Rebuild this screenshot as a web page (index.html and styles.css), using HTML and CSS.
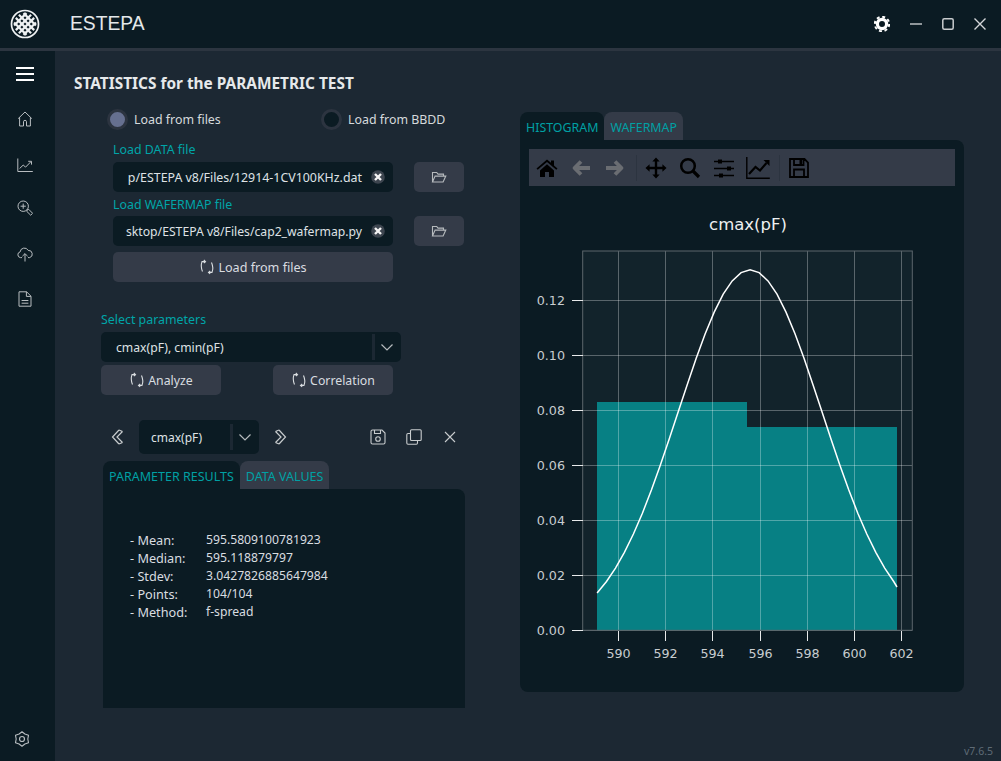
FILE: index.html
```html
<!DOCTYPE html>
<html lang="en">
<head>
<meta charset="utf-8">
<title>ESTEPA</title>
<link rel="stylesheet" href="styles.css">
</head>
<body>
<svg class="defs" width="0" height="0" aria-hidden="true">
  <symbol id="refresh" viewBox="0 0 16 16"><g fill="none" stroke="currentColor" stroke-width="1.1"><path d="M6 2.600H3Q1.300 7 3.500 12.500"/><path d="M4.800 1 6.500 2.600 4.800 4"/><path d="M10 13.400h3Q14.800 9 12.500 3.500"/><path d="M11.200 12 9.500 13.400l1.700 1.500"/></g></symbol>
  <symbol id="folder" viewBox="0 0 16 16"><path fill="none" stroke="currentColor" stroke-width="1.1" d="M1.500 13V3.500h4.200l1.300 1.600h5.500v2M1.500 13h10.600l2.700-5.900H4.100L1.500 13z"/></symbol>
  <symbol id="clear" viewBox="0 0 14 14"><circle cx="7" cy="7" r="6.800" fill="#3d454f"/><path d="M4 4l6 6m0-6L4 10" stroke="#f4f4f4" stroke-width="2.400"/></symbol>
  <symbol id="chev" viewBox="0 0 16 16"><path fill="none" stroke="currentColor" stroke-width="1.200" d="M2.500 5.500 8 11l5.500-5.500"/></symbol>
</svg>
<div class="app">
  <header class="titlebar">
    <svg class="logo" viewBox="0 0 32 32" width="32" height="32" aria-hidden="true">
      <circle cx="16" cy="16" r="13.500" fill="none" stroke="#eef1f2" stroke-width="1.700"/>
      <g stroke="#eef1f2" stroke-width="2.200" fill="none">
        <path d="M9.900 6.800 25.200 22.100M6.800 9.900 22.100 25.200M14.500 5.100 26.900 17.500M5.100 14.500 17.500 26.900"/>
        <path d="M22.100 6.800 6.800 22.100M25.200 9.900 9.900 25.200M17.500 5.100 5.100 17.500M26.900 14.500 14.500 26.900"/>
      </g>
    </svg>
    <span class="apptitle">ESTEPA</span>
    <div class="winbtns">
      <svg width="16" height="16" viewBox="0 0 16 16" aria-hidden="true"><circle cx="8" cy="8" r="4.600" fill="none" stroke="#fff" stroke-width="3.200"/><circle cx="8" cy="8" r="7.200" fill="none" stroke="#fff" stroke-width="2" stroke-dasharray="3 2.650"/></svg>
      <svg width="12" height="12" viewBox="0 0 12 12" aria-hidden="true"><path d="M0 6h12" stroke="#c9ccce" stroke-width="1.400"/></svg>
      <svg width="12" height="12" viewBox="0 0 12 12" aria-hidden="true"><rect x=".8" y=".8" width="10.400" height="10.400" rx="1.500" fill="none" stroke="#c9ccce" stroke-width="1.500"/></svg>
      <svg width="12" height="12" viewBox="0 0 12 12" aria-hidden="true"><path d="M.5.5l11 11m0-11L.5 11.500" stroke="#d4d6d8" stroke-width="1.400"/></svg>
    </div>
  </header>
  <div class="body">
    <nav class="sidebar">
      <svg class="ham" width="18" height="14" viewBox="0 0 18 14" aria-hidden="true"><path d="M0 1h18M0 7h18M0 13h18" stroke="#fff" stroke-width="2"/></svg>
      <svg class="navicon" width="16" height="16" viewBox="0 0 16 16" aria-hidden="true"><path fill="none" stroke="currentColor" d="M1.200 7.600 8 1l6.800 6.600M2.600 6.400V15h3.900v-4.200a1.500 1.500 0 0 1 3 0V15h3.900V6.400"/></svg>
      <svg class="navicon" width="16" height="16" viewBox="0 0 16 16" aria-hidden="true"><path fill="none" stroke="currentColor" d="M.8 1.500v13h15M2.600 11.500l3.600-3.400 2.400 2 5.200-5.300M11.200 4.300h3.300v3.300"/></svg>
      <svg class="navicon tight" width="16" height="16" viewBox="0 0 16 16" aria-hidden="true"><g fill="none" stroke="currentColor"><circle cx="6.200" cy="6.200" r="5.200"/><path d="M3.600 6.200h5.200M6.200 3.600v5.200"/><path d="M10.200 9.800l1.600-.4 3.800 3.900-1.900 1.900-3.900-3.800z"/></g></svg>
      <svg class="navicon" width="16" height="16" viewBox="0 0 16 16" aria-hidden="true"><path fill="none" stroke="currentColor" d="M5 11.600H3.400a2.900 2.900 0 0 1-.3-5.700A4.300 4.300 0 0 1 11.200 4.400a3.700 3.700 0 0 1 1.500 7.200H11M8 15.500V7.800M5.400 10.200 8 7.600l2.600 2.600"/></svg>
      <svg class="navicon near" width="16" height="16" viewBox="0 0 16 16" aria-hidden="true"><path fill="none" stroke="currentColor" d="M2 .8h7.600l4.400 4.400v10H2zM9.400.8v4.600h4.600M4.600 9.500h6.800M4.600 12.200h6.800"/></svg>
      <svg class="navicon settings" width="16" height="16" viewBox="0 0 16 16" aria-hidden="true"><path fill="none" stroke="currentColor" stroke-linejoin="round" stroke-width="1.100" d="M8 .8 10.900 3 14.500 4.300 13.800 8 14.500 11.700 10.900 13 8 15.200 5.100 13 1.500 11.700 2.200 8 1.500 4.300 5.100 3z"/><circle cx="8" cy="8" r="2.500" fill="none" stroke="currentColor" stroke-width="1.200"/></svg>
    </nav>
    <main class="main">
      <h1 class="heading">STATISTICS for the PARAMETRIC TEST</h1>
      <div class="columns">
        <section class="leftcol">
          <div class="radios">
            <label class="radio"><span class="dot on"></span>Load from files</label>
            <label class="radio"><span class="dot"></span>Load from BBDD</label>
          </div>
          <div class="filegroup">
            <div class="lbl">Load DATA file</div>
            <div class="filerow">
              <div class="field"><span class="clip">p/ESTEPA v8/Files/12914-1CV100KHz.dat</span><svg class="clear" width="14" height="14" aria-hidden="true"><use href="#clear"/></svg></div>
              <button class="btn folderbtn"><svg width="16" height="16" aria-hidden="true"><use href="#folder"/></svg></button>
            </div>
            <div class="lbl second">Load WAFERMAP file</div>
            <div class="filerow">
              <div class="field"><span class="clip narrow">sktop/ESTEPA v8/Files/cap2_wafermap.py</span><svg class="clear" width="14" height="14" aria-hidden="true"><use href="#clear"/></svg></div>
              <button class="btn folderbtn"><svg width="16" height="16" aria-hidden="true"><use href="#folder"/></svg></button>
            </div>
            <button class="btn loadbtn"><svg width="16" height="16" aria-hidden="true"><use href="#refresh"/></svg>Load from files</button>
          </div>
          <div class="paramgroup">
            <div class="lbl">Select parameters</div>
            <div class="combo wide"><span class="combotext">cmax(pF), cmin(pF)</span><span class="arrow"><svg width="16" height="16" aria-hidden="true"><use href="#chev"/></svg></span></div>
            <div class="actions">
              <button class="btn actbtn"><svg width="16" height="16" aria-hidden="true"><use href="#refresh"/></svg>Analyze</button>
              <button class="btn actbtn"><svg width="16" height="16" aria-hidden="true"><use href="#refresh"/></svg>Correlation</button>
            </div>
          </div>
          <div class="navrow">
            <svg class="pager" width="14" height="16" viewBox="0 0 14 16" aria-hidden="true"><path fill="none" stroke="currentColor" stroke-width="1.200" d="M8 1 1.500 8 8 15M11.500 2.500 6 8l5.500 5.500M8 1l3.500 1.500M8 15l3.500-1.500"/></svg>
            <div class="combo small"><span class="combotext">cmax(pF)</span><span class="arrow"><svg width="16" height="16" aria-hidden="true"><use href="#chev"/></svg></span></div>
            <svg class="pager" width="14" height="16" viewBox="0 0 14 16" aria-hidden="true"><path fill="none" stroke="currentColor" stroke-width="1.200" d="M6 1l6.500 7L6 15M2.500 2.500 8 8l-5.500 5.500M6 1 2.500 2.500M6 15l-3.500-1.500"/></svg>
            <div class="tools">
              <svg width="16" height="16" viewBox="0 0 16 16" aria-hidden="true"><g fill="none" stroke="currentColor" stroke-width="1.100"><path d="M1 2.500a1.500 1.500 0 0 1 1.500-1.500h9.500l3 3v9.500a1.500 1.500 0 0 1-1.500 1.500h-11a1.500 1.500 0 0 1-1.500-1.500z"/><path d="M4.500 1v3.500h6V1"/><circle cx="8" cy="10" r="2.300"/></g></svg>
              <svg width="16" height="16" viewBox="0 0 16 16" aria-hidden="true"><g fill="none" stroke="currentColor" stroke-width="1.100"><rect x="4.500" y=".8" width="10.700" height="10.700" rx="1"/><path d="M4.500 4.500H2a1.200 1.200 0 0 0-1.200 1.200V14A1.200 1.200 0 0 0 2 15.200h8.300a1.200 1.200 0 0 0 1.200-1.200v-2.500"/></g></svg>
              <svg width="16" height="16" viewBox="0 0 16 16" aria-hidden="true"><path d="M3 3l10 10m0-10L3 13" stroke="currentColor" stroke-width="1.100"/></svg>
            </div>
          </div>
          <div class="tabs">
            <span class="tab active">PARAMETER RESULTS</span>
            <span class="tab">DATA VALUES</span>
          </div>
          <div class="results">
            <dl class="stats">
              <dt>- Mean:</dt><dd>595.5809100781923</dd>
              <dt>- Median:</dt><dd>595.118879797</dd>
              <dt>- Stdev:</dt><dd>3.0427826885647984</dd>
              <dt>- Points:</dt><dd>104/104</dd>
              <dt>- Method:</dt><dd>f-spread</dd>
            </dl>
          </div>
        </section>
        <section class="rightcol">
          <div class="tabs">
            <span class="tab active">HISTOGRAM</span>
            <span class="tab">WAFERMAP</span>
          </div>
          <div class="chartpanel">
            <div class="toolbar">
              <svg class="tb" width="22" height="22" viewBox="0 0 22 22" aria-hidden="true"><path fill="#000" d="M11 2.500 .5 11.500l1.200 1.300L11 5l9.300 7.800 1.200-1.300-3.500-3.100V3.500h-3v2.200zM4 13.500V20h5v-5h4v5h5v-6.500L11 7.300z"/></svg>
              <svg class="tb" width="22" height="22" viewBox="0 0 22 22" aria-hidden="true"><path fill="none" stroke="#6a6d72" stroke-width="3.800" stroke-linejoin="round" d="M20 11H5M11 4.500 4.500 11l6.500 6.500"/></svg>
              <svg class="tb" width="22" height="22" viewBox="0 0 22 22" aria-hidden="true"><path fill="none" stroke="#6a6d72" stroke-width="3.800" stroke-linejoin="round" d="M2 11h15M11 4.500l6.500 6.500-6.500 6.500"/></svg>
              <span class="tbsep"></span>
              <svg class="tb" width="22" height="22" viewBox="0 0 24 24" aria-hidden="true"><path fill="#000" d="M12 .5 16 5h-2.700v5.700H19V8l4.500 4-4.500 4v-2.700h-5.700V19H16l-4 4.500L8 19h2.700v-5.700H5V16L.5 12 5 8v2.700h5.700V5H8z"/></svg>
              <svg class="tb" width="22" height="22" viewBox="0 0 22 22" aria-hidden="true"><g fill="none" stroke="#000"><circle cx="9" cy="9" r="6.800" stroke-width="2.500"/><path d="M14 14l6 6" stroke-width="3.200"/></g></svg>
              <svg class="tb" width="22" height="22" viewBox="0 0 22 22" aria-hidden="true"><path stroke="#000" stroke-width="1.600" d="M1 4.500h20M1 11.500h20M1 18.500h20"/><path fill="#000" d="M5 2.500h4v4H5zM14 9.500h4v4h-4zM6 16.500h4v4H6z"/></svg>
              <svg class="tb" width="24" height="24" viewBox="0 0 24 24" aria-hidden="true"><path fill="none" stroke="#000" stroke-width="1.400" d="M.8 1v21.300h23"/><path fill="none" stroke="#000" stroke-width="2.200" d="M3 18l6.500-7 4.500 3.500 6.500-7.500"/><path fill="#000" d="M17.500 4h6v6z"/></svg>
              <span class="tbsep"></span>
              <svg class="tb" width="22" height="22" viewBox="0 0 22 22" aria-hidden="true"><path fill="none" stroke="#000" stroke-width="1.800" d="M2 2h14.500L20 5.500V20H2zM6 2v6h9.500V2M6 20v-7.500h10V20"/><path fill="#000" d="M11.500 3h2.500v4h-2.500z"/></svg>
            </div>
            <svg class="chart" width="444" height="506" viewBox="520 186 444 506" role="img" aria-label="Histogram of cmax(pF)">
              <text x="748" y="230" class="ctitle">cmax(pF)</text>
              <rect x="582.700" y="251" width="329.600" height="379.300" fill="#12232b"/>
              <path d="M597 630.300V402H747V427H897V630.300z" fill="#078084"/>
              <g stroke="#fff" stroke-opacity=".3" stroke-width="1">
                <path d="M618.500 251V630M665.500 251V630M712.500 251V630M760.500 251V630M807.500 251V630M854.500 251V630M901.500 251V630"/>
                <path d="M583 630.500H912M583 575.500H912M583 520.500H912M583 465.500H912M583 410.500H912M583 355.500H912M583 300.500H912"/>
              </g>
              <polyline fill="none" stroke="#fff" stroke-width="1.500" points="597.100,593 606.500,581.500 615.500,568.100 624.400,552.300 633.400,534 642.400,513.200 651.400,490.100 660.300,465.200 669.300,438.800 678.300,411.600 687.300,384.400 696.200,358.200 705.200,333.700 714.200,312.100 723.200,294.200 732.200,280.900 741.100,272.600 750.100,269.700 759.100,272.600 768,280.900 777,294.200 786,312.100 795,333.700 804,358.200 812.900,384.400 821.900,411.600 830.900,438.800 839.900,465.200 848.800,490.100 857.800,513.200 866.800,534 875.800,552.300 884.700,568.100 893.700,581.500 897,587"/>
              <rect x="582.700" y="251" width="329.600" height="379.300" fill="none" stroke="#5c666c" stroke-width="1"/>
              <g stroke="#e8eaeb" stroke-width="1">
                <path d="M618.500 631v10M665.500 631v10M712.500 631v10M760.500 631v10M807.500 631v10M854.500 631v10M901.500 631v10"/>
                <path d="M572 630.500h11M572 575.500h11M572 520.500h11M572 465.500h11M572 410.500h11M572 355.500h11M572 300.500h11"/>
              </g>
              <g class="xt">
                <text x="618.500" y="658">590</text><text x="665.500" y="658">592</text><text x="712.500" y="658">594</text><text x="760.500" y="658">596</text><text x="807.500" y="658">598</text><text x="854.500" y="658">600</text><text x="901.500" y="658">602</text>
              </g>
              <g class="yt">
                <text x="565" y="635">0.00</text><text x="565" y="580">0.02</text><text x="565" y="525">0.04</text><text x="565" y="470">0.06</text><text x="565" y="415">0.08</text><text x="565" y="360">0.10</text><text x="565" y="305">0.12</text>
              </g>
            </svg>
          </div>
        </section>
      </div>
      <footer class="version">v7.6.5</footer>
    </main>
  </div>
</div>
</body>
</html>
```
FILE: styles.css
```css
* { box-sizing: border-box; }
html, body { margin: 0; height: 100%; }
body { background: #1c2833; color: #d9dde0; font: 12.400px "Noto Sans", sans-serif; overflow: hidden; }
.defs { position: absolute; }
.app { width: 1001px; height: 761px; display: flex; flex-direction: column; }

.titlebar { height: 51px; flex: none; background: #0b1b23; border-bottom: 3px solid #2c3540; display: flex; align-items: center; padding: 0 15px 0 9px; }
.logo { flex: none; }
.apptitle { margin-left: 29px; font: 19.300px "Liberation Sans", Arial, sans-serif; color: #e4e8ea; }
.winbtns { margin-left: auto; display: flex; align-items: center; gap: 20px; }

.body { flex: 1; display: flex; min-height: 0; }
.sidebar { width: 55px; flex: none; background: #0b1b23; display: flex; flex-direction: column; align-items: center; color: #b8bdc0; padding: 16px 6px 0 0; }
.navicon { margin-top: 30px; display: block; }
.navicon.tight { margin-top: 27px; }
.navicon.near { margin-top: 29px; }
.navicon.settings { margin-top: auto; margin-bottom: 14px; margin-right: 6px; }

.main { flex: 1; padding: 23px 0 0 19px; position: relative; min-width: 0; }
.heading { margin: 0; font: 700 15.400px/20px "Noto Sans", sans-serif; color: #e6e9eb; }
.columns { display: flex; margin-top: 5px; }
.leftcol { width: 391px; padding-left: 29px; flex: none; }
.rightcol { margin: 13px 0 0 55px; width: 444px; flex: none; }
.rightcol .tab { font-size: 12.400px; }

.radios { display: flex; margin-left: 4px; height: 22px; margin-top: 9px; }
.radio { display: flex; align-items: center; gap: 6px; width: 214px; flex: none; color: #d6dadd; }
.dot { width: 21px; height: 21px; border-radius: 50%; background: #0b1b23; border: 3px solid #2c3440; }
.dot.on { background: #667090; }

.lbl { color: #00a5a8; line-height: 18px; height: 18px; }
.filegroup { margin: 11px 0 0 10px; }
.filerow { display: flex; gap: 21px; height: 30px; margin-top: 3px; }
.lbl.second { margin-top: 3px; height: 18px; line-height: 19px; }
.field { width: 280px; height: 30px; background: #0b1b23; border-radius: 5px; display: flex; align-items: center; padding: 0 8px 0 12px; }
.clip { flex: 1; min-width: 0; text-align: right; white-space: nowrap; padding-right: 9px; color: #dfe2e5; font-size: 12.400px; }
.clip.narrow { font-size: 12.200px; }
.clear { flex: none; }
.btn { border: 0; background: #343b48; color: #d9dde0; font: inherit; border-radius: 5px; display: flex; align-items: center; justify-content: center; padding: 0; }
.folderbtn { width: 50px; height: 30px; color: #b6babd; }
.loadbtn { width: 280px; height: 30px; margin-top: 6px; gap: 3px; font-size: 12.600px; }

.paramgroup { margin: 28px 0 0 -2px; }
.paramgroup .lbl { line-height: 20px; }
.combo { background: #0b1b23; border-radius: 5px; display: flex; align-items: center; color: #dfe2e5; font-size: 12.200px; }
.combo.wide { width: 300px; height: 30px; margin-top: 4px; padding-left: 15px; }
.combotext { flex: 1; padding-top: 1px; }
.combo.small { width: 120px; height: 34px; padding-left: 12px; font-size: 12px; }
.arrow { width: 29px; height: 26px; border-left: 3px solid #1c2833; padding-right: 2px; display: flex; align-items: center; justify-content: center; color: #b6babd; }
.actions { display: flex; width: 292px; justify-content: space-between; margin-top: 3px; }
.actbtn { width: 120px; height: 30px; gap: 3px; font-size: 12.300px; }

.navrow { display: flex; align-items: center; margin: 24px 0 0 8px; height: 35px; color: #c8ccce; width: 355px; }
.pager { flex: none; }
.pager:first-child { margin-right: 14px; }
.combo + .pager { margin-left: 14px; }
.tools { margin-left: auto; display: flex; gap: 20px; margin-right: 8px; }

.tabs { display: flex; height: 28px; }
.leftcol .tabs { margin-top: 7px; }
.tab { padding: 0 6px; line-height: 31px; background: #343b48; color: #00a0a4; border-radius: 8px 8px 0 0; font-size: 12.500px; white-space: nowrap; }
.tab.active { background: #0b1b23; }
.results { width: 362px; height: 219px; background: #0b1b23; border-radius: 0 8px 0 0; padding: 42px 0 0 27px; }
.stats { margin: 0; display: grid; grid-template-columns: 76px auto; grid-auto-rows: 18px; line-height: 18px; font-size: 12.200px; color: #d9dde0; }
.stats dt, .stats dd { margin: 0; }
.stats dt { font-size: 12.700px; }

.chartpanel { width: 444px; height: 552px; background: #0b1b23; border-radius: 0 8px 8px 8px; padding-top: 9px; }
.toolbar { margin-left: 9px; width: 426px; height: 37px; background: #343b48; display: flex; align-items: center; padding-left: 1px; }
.tb { flex: none; width: 34px; }
.tbsep { width: 1px; height: 26px; background: #2c3440; flex: none; margin: 0 2.500px 0 3.500px; }
.chart { display: block; margin-top: 0; }
.ctitle { font: 16.500px "DejaVu Sans", sans-serif; fill: #eef0f1; text-anchor: middle; }
.xt text, .yt text { font: 12.700px "DejaVu Sans", sans-serif; fill: #c8cdd0; }
.xt text { text-anchor: middle; }
.yt text { text-anchor: end; }

.version { position: absolute; right: 8px; bottom: 3px; font-size: 10.500px; color: #5f6b76; }
```
